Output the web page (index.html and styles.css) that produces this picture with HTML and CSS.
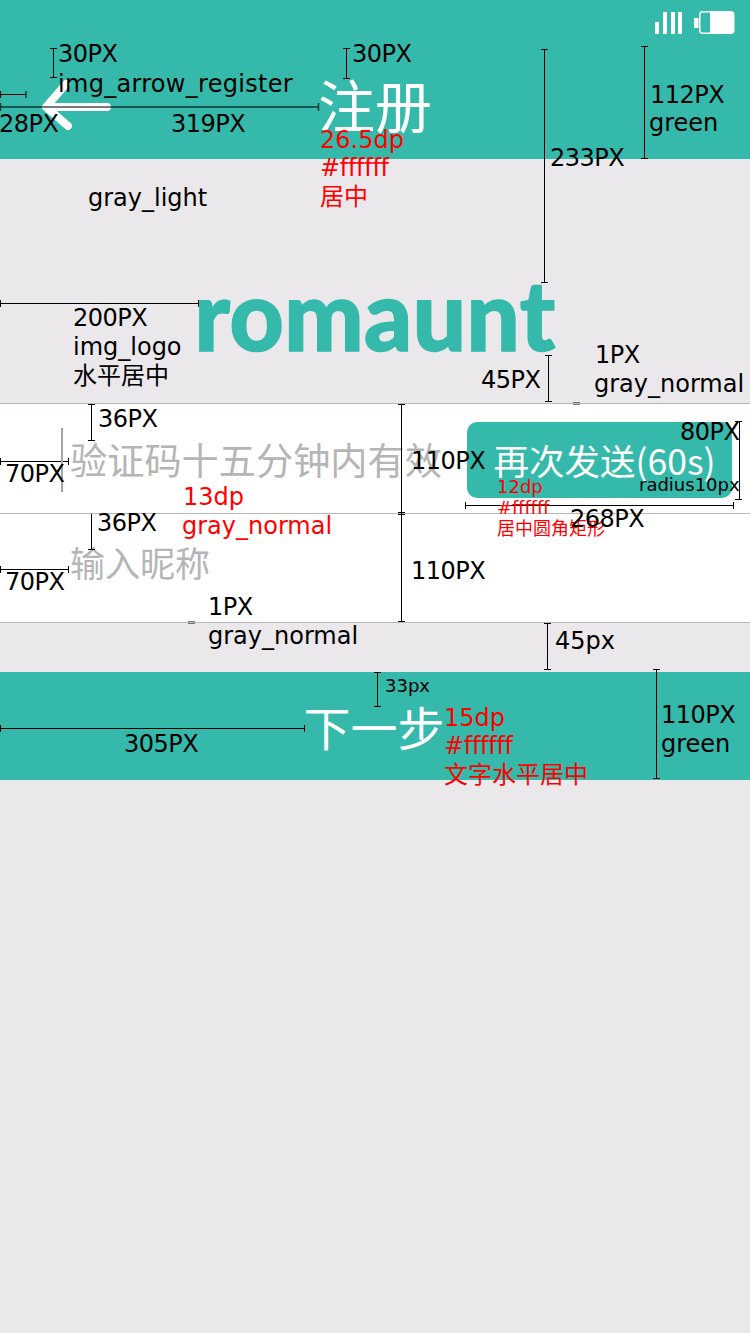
FILE: index.html
```html
<!DOCTYPE html>
<html lang="zh-CN">
<head>
    <meta charset="UTF-8">
    <meta name="viewport" content="width=device-width, initial-scale=1.0">
    <title>注册</title>
    <link rel="stylesheet" href="styles.css">
</head>
<body>
<div class="page">
    <header class="topbar">
        <div class="status">
            <svg class="signal" width="28" height="24" viewBox="0 0 28 24">
                <path d="M0 11h4v12H0zM8 1h4v22H8zM16 1h4v22h-4zM23 1h4v22h-4z" fill="#fff"/>
            </svg>
            <svg class="battery" width="41" height="24" viewBox="0 0 41 24">
                <path d="M0 7h4.500v10H0z" fill="#fff"/>
                <rect x="5.750" y="0.750" width="34" height="21.500" rx="3" fill="none" stroke="#fff" stroke-width="1.500"/>
                <path d="M16 1h21a3 3 0 0 1 3 3v15a3 3 0 0 1-3 3H16z" fill="#fff"/>
            </svg>
        </div>
        <svg class="back" width="80" height="60" viewBox="0 0 80 60">
            <path d="M25 6 5 29h61M5 29l22 19" fill="none" stroke="#fff" stroke-width="8" stroke-linecap="round" stroke-linejoin="round"/>
        </svg>
        <h1 class="title">注册</h1>
    </header>

    <div class="logo-area">
        <span class="logo">romaunt</span>
    </div>

    <form class="form">
        <div class="row">
            <span class="hint hint-code">验证码十五分钟内有效</span>
            <button type="button" class="resend">再次发送(60s)</button>
        </div>
        <div class="row">
            <span class="hint hint-name">输入昵称</span>
        </div>
    </form>

    <div class="next">下一步</div>

    <!-- dimension lines of the spec sheet -->
    <svg class="dims" width="750" height="1333" viewBox="0 0 750 1333">
        <g class="dim-lines">
            <path d="M53.500 48v30M50 48.500h7M50 77.500h7"/>
            <path d="M346.500 48v31M343 48.500h7M343 78.500h7"/>
            <path d="M0 94.500h26M.5 91v7M26 91v7"/>
            <path class="soft" d="M0 107h319M.5 103v8M318.500 103v8"/>
            <path d="M544.500 49v234M541 49.500h7M541 282.500h7"/>
            <path d="M644.500 46v113M641 46.500h7M641 158.500h7"/>
            <path d="M0 303.500h199M.5 300v7M198.500 300v7"/>
            <path d="M548.500 355v47M545 355.500h7M545 401.500h7"/>
            <path class="tick" d="M573 402.500h7M573 404.500h7"/>
            <path d="M401.500 404v218M398 404.500h7M398 512.500h7M398 514.500h7M398 621.500h7"/>
            <path d="M91.500 404v37M88 404.500h7M88 440.500h7"/>
            <path d="M91.500 514v36M88 549.500h7"/>
            <path d="M0 461.500h69M.5 458v7M68.500 458v7"/>
            <path d="M0 569.500h69M.5 566v7M68.500 566v7"/>
            <path d="M739.500 421v79M735 421.500h7M735 499.500h7"/>
            <path d="M465.500 505.500h268M465.500 502v7M733.500 502v7"/>
            <path class="tick" d="M188 621.500h7M188 623.500h7"/>
            <path d="M547.500 623v47M544 623.500h7M544 669.500h7"/>
            <path d="M377.500 672v35M374 672.500h7M374 706.500h7"/>
            <path d="M656.500 669v110M653 669.500h7M653 778.500h7"/>
            <path d="M0 728.500h305M.5 725v7M304.500 725v7"/>
        </g>
        <path class="cursor" d="M62 428v64"/>
    </svg>

    <!-- annotations -->
    <div class="notes">
        <span class="note size n-arrow-top">30PX</span>
        <span class="note n-arrow-name">img_arrow_register</span>
        <span class="note size n-title-top">30PX</span>
        <span class="note size n-arrow-left">28PX</span>
        <span class="note size n-title-left">319PX</span>
        <span class="note red n-title-size">26.5dp</span>
        <span class="note red hex n-title-color">#ffffff</span>
        <span class="note red n-title-align">居中</span>
        <span class="note n-gray-light">gray_light</span>
        <span class="note size n-logo-top">233PX</span>
        <span class="note size n-bar-height">112PX</span>
        <span class="note n-bar-color">green</span>
        <span class="note size n-logo-left">200PX</span>
        <span class="note n-logo-name">img_logo</span>
        <span class="note n-logo-align">水平居中</span>
        <span class="note size n-logo-bottom">45PX</span>
        <span class="note size n-line-1px">1PX</span>
        <span class="note n-line-color">gray_normal</span>
        <span class="note size n-row1-top">36PX</span>
        <span class="note size n-row1-left">70PX</span>
        <span class="note size n-row1-height">110PX</span>
        <span class="note red n-hint-size">13dp</span>
        <span class="note red n-hint-color">gray_normal</span>
        <span class="note size n-row2-top">36PX</span>
        <span class="note size n-row2-left">70PX</span>
        <span class="note size n-row2-height">110PX</span>
        <span class="note size n-line2-1px">1PX</span>
        <span class="note n-line2-color">gray_normal</span>
        <span class="note n-next-gap">45px</span>
        <span class="note small n-next-top">33px</span>
        <span class="note size n-next-left">305PX</span>
        <span class="note red n-next-size">15dp</span>
        <span class="note red hex n-next-color">#ffffff</span>
        <span class="note red n-next-align">文字水平居中</span>
        <span class="note size n-next-height">110PX</span>
        <span class="note n-next-bg">green</span>
        <span class="note size n-btn-height">80PX</span>
        <span class="note small n-btn-radius">radius10px</span>
        <span class="note small red n-btn-size">12dp</span>
        <span class="note small red n-btn-color">#ffffff</span>
        <span class="note small red n-btn-align">居中圆角矩形</span>
        <span class="note size n-btn-width">268PX</span>
    </div>
</div>
</body>
</html>
```

FILE: styles.css
```css
* {
    box-sizing: border-box;
}
body {
    margin: 0;
    background-color: #eae8eb;
    font-family: "Noto Sans CJK SC", sans-serif;
    overflow: hidden;
}
.page {
    position: relative;
    width: 750px;
    height: 1333px;
}

/* header */
.topbar {
    position: relative;
    height: 159px;
    background-color: #34b9aa;
    display: flex;
    justify-content: center;
    align-items: flex-end;
    padding-bottom: 24px;
}
.status {
    position: absolute;
    top: 11px;
    left: 655px;
    display: flex;
    align-items: flex-end;
    gap: 11px;
}
.back {
    position: absolute;
    left: 41px;
    top: 78px;
}
.title {
    margin: 0;
    font-size: 57px;
    font-weight: 400;
    line-height: 64px;
    color: #fff;
}

/* logo */
.logo-area {
    height: 244px;
    display: flex;
    justify-content: center;
    align-items: flex-start;
}
.logo {
    margin-top: 100px;
    font-family: "Lato", sans-serif;
    font-weight: 900;
    font-size: 97px;
    line-height: 110px;
    color: #34b9aa;
    -webkit-text-stroke: 1.500px #34b9aa;
    letter-spacing: 0.500px;
    transform: scaleX(0.97);
}

/* form */
.form {
    background-color: #fff;
    border-top: 1px solid #b9b7ba;
}
.row {
    height: 110px;
    padding-left: 70px;
    border-bottom: 1px solid #b9b7ba;
    display: flex;
    align-items: center;
    justify-content: space-between;
}
.row + .row {
    height: 109px;
}
.hint {
    color: #b5b5b5;
}
.hint-code {
    font-size: 37.200px;
    white-space: nowrap;
}
.hint-name {
    font-size: 35px;
    margin-top: -14px;
}
.resend {
    width: 265px;
    height: 76px;
    margin-right: 18px;
    margin-top: 2px;
    padding: 0 0 0 10px;
    border: none;
    border-radius: 10px;
    background-color: #34b9aa;
    color: #fff;
    font-family: inherit;
    font-size: 35.500px;
    white-space: nowrap;
}

.next {
    margin-top: 49px;
    height: 108px;
    background-color: #34b9aa;
    color: #fff;
    font-size: 47px;
    display: flex;
    align-items: center;
    justify-content: center;
    padding: 0 2px 2px 0;
}

/* spec overlay */
.dims {
    position: absolute;
    top: 0;
    left: 0;
}
.dim-lines path {
    fill: none;
    stroke: #000;
    stroke-width: 1;
}
.dim-lines .soft {
    stroke-width: 1.500;
    stroke-opacity: 0.7;
}
.dim-lines .tick {
    stroke-opacity: 0.5;
}
.cursor {
    fill: none;
    stroke: #a5a5a5;
    stroke-width: 2;
}
.notes {
    position: absolute;
    top: 0;
    left: 0;
    width: 750px;
    height: 1333px;
}
.note {
    position: absolute;
    font-family: "DejaVu Sans", "Noto Sans CJK SC", sans-serif;
    font-size: 24px;
    line-height: 30px;
    color: #000;
    white-space: nowrap;
}
.note.size {
    letter-spacing: -0.500px;
}
.note.hex {
    letter-spacing: -0.300px;
}
.note.small {
    font-size: 18px;
}
.note.red {
    color: #ff0000;
}

.n-arrow-top { left: 58px; top: 39px; }
.n-arrow-name { left: 58px; top: 69px; letter-spacing: 0.300px; }
.n-title-top { left: 352px; top: 39px; }
.n-arrow-left { left: -1px; top: 109px; }
.n-title-left { left: 171px; top: 109px; }
.n-title-size { left: 320px; top: 125px; }
.n-title-color { left: 320px; top: 153px; }
.n-title-align { left: 320px; top: 182px; }
.n-gray-light { left: 88px; top: 183px; }
.n-logo-top { left: 550px; top: 143px; }
.n-bar-height { left: 650px; top: 80px; }
.n-bar-color { left: 649px; top: 108px; }
.n-logo-left { left: 73px; top: 303px; }
.n-logo-name { left: 73px; top: 332px; }
.n-logo-align { left: 73px; top: 361px; }
.n-logo-bottom { left: 481px; top: 365px; }
.n-line-1px { left: 595px; top: 340px; }
.n-line-color { left: 594px; top: 369px; }
.n-row1-top { left: 98px; top: 404px; }
.n-row1-left { left: 5px; top: 459px; }
.n-row1-height { left: 411px; top: 446px; }
.n-hint-size { left: 183px; top: 482px; }
.n-hint-color { left: 182px; top: 511px; }
.n-row2-top { left: 97px; top: 508px; }
.n-row2-left { left: 5px; top: 567px; }
.n-row2-height { left: 411px; top: 556px; }
.n-line2-1px { left: 208px; top: 592px; }
.n-line2-color { left: 208px; top: 621px; }
.n-next-gap { left: 555px; top: 626px; }
.n-next-top { left: 385px; top: 671px; }
.n-next-left { left: 124px; top: 729px; }
.n-next-size { left: 444px; top: 703px; }
.n-next-color { left: 444px; top: 731px; }
.n-next-align { left: 444px; top: 760px; }
.n-next-height { left: 661px; top: 700px; }
.n-next-bg { left: 661px; top: 729px; }
.n-btn-height { left: 680px; top: 417px; }
.n-btn-radius { left: 639px; top: 470px; }
.n-btn-size { left: 497px; top: 472px; }
.n-btn-color { left: 497px; top: 493px; }
.n-btn-align { left: 497px; top: 514px; font-size: 17px; }
.n-btn-width { left: 570px; top: 504px; }
```
